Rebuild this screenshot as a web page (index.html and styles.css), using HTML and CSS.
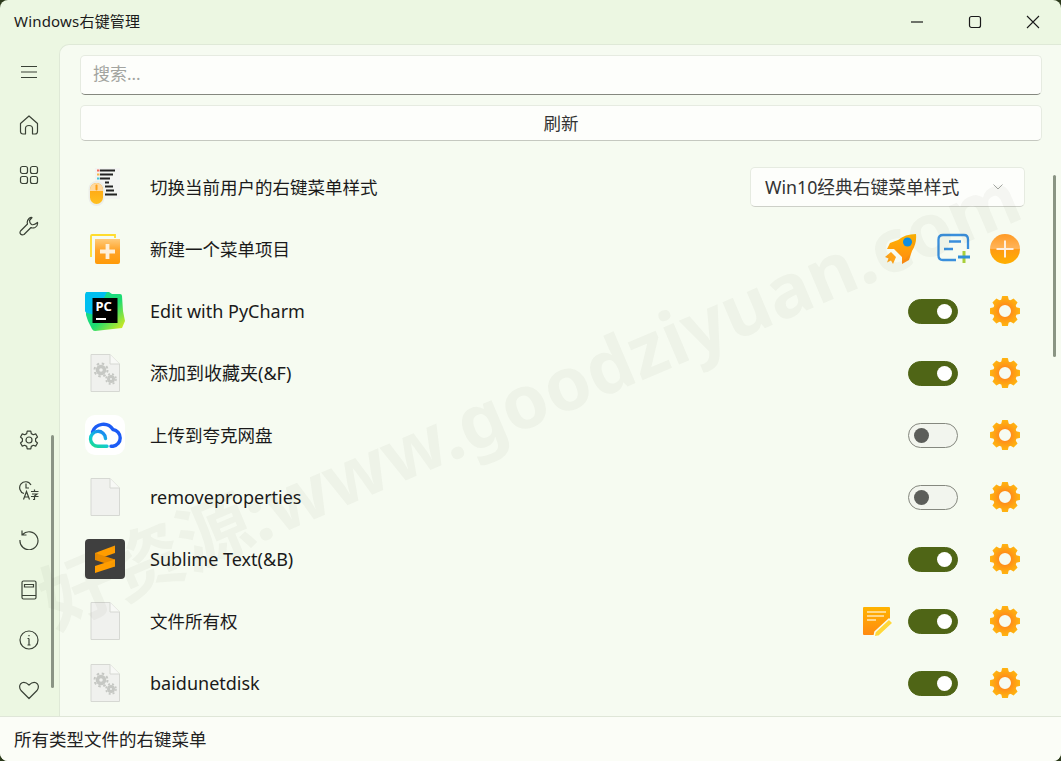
FILE: index.html
```html
<!DOCTYPE html>
<html>
<head>
    <meta charset="utf-8">
    <title>Windows右键管理</title>
    <link rel="stylesheet" href="styles.css">
</head>
<body>
    <!-- 共用图标 -->
    <svg class="svg-defs" aria-hidden="true">
        <defs>
            <linearGradient id="orange" x1="0" y1="0" x2="0" y2="1">
                <stop offset="0" stop-color="#ffb300"/>
                <stop offset="1" stop-color="#ff8a12"/>
            </linearGradient>
            <linearGradient id="mouse" x1="0" y1="0" x2="0" y2="1">
                <stop offset="0" stop-color="#ffa010"/>
                <stop offset="1" stop-color="#ffc020"/>
            </linearGradient>
            <linearGradient id="folder" x1="0" y1="0" x2="0" y2="1">
                <stop offset="0" stop-color="#ffcb7a"/>
                <stop offset="0.45" stop-color="#ffa42a"/>
                <stop offset="1" stop-color="#ff9a08"/>
            </linearGradient>
            <linearGradient id="plus-btn" x1="0" y1="0" x2="0" y2="1">
                <stop offset="0" stop-color="#ff9a24"/>
                <stop offset="0.48" stop-color="#ffb45a"/>
                <stop offset="0.52" stop-color="#ff9a12"/>
                <stop offset="1" stop-color="#ffb000"/>
            </linearGradient>
            <linearGradient id="cloud-teal" x1="0" y1="1" x2="0.6" y2="0">
                <stop offset="0" stop-color="#1bdc8a"/>
                <stop offset="0.5" stop-color="#12c8d8"/>
                <stop offset="1" stop-color="#1a8cf0"/>
            </linearGradient>
            <linearGradient id="pc-green" x1="0" y1="0" x2="1" y2="1">
                <stop offset="0" stop-color="#12d8a0"/>
                <stop offset="0.55" stop-color="#1ddc70"/>
                <stop offset="1" stop-color="#f4ea10"/>
            </linearGradient>
            <radialGradient id="gear-ring" gradientUnits="userSpaceOnUse" cx="16" cy="16" r="16">
                <stop offset="0.4" stop-color="#ff8f1a"/>
                <stop offset="0.62" stop-color="#ffa014"/>
                <stop offset="1" stop-color="#ffb810"/>
            </radialGradient>
            <symbol id="file" viewBox="0 0 40 40">
                <path d="M6 1.500H25L34.500 11V38.500H6Z" fill="#f0f1ee" stroke="#d6d8d3"/>
                <path d="M25 1.500V11H34.500" fill="#f8f9f6" stroke="#d6d8d3"/>
            </symbol>
            <symbol id="file-gear" viewBox="0 0 40 40">
                <use href="#file"/>
                <circle cx="16" cy="17" r="3.500" fill="none" stroke="#c6c8c4" stroke-width="3.500"/>
                <circle cx="16" cy="17" r="6.500" fill="none" stroke="#c6c8c4" stroke-width="2" stroke-dasharray="2.500 2.600"/>
                <circle cx="26" cy="26" r="2.500" fill="none" stroke="#c6c8c4" stroke-width="3"/>
                <circle cx="26" cy="26" r="5" fill="none" stroke="#c6c8c4" stroke-width="1.600" stroke-dasharray="2 2"/>
            </symbol>
            <symbol id="gear" viewBox="0 0 32 32">
                <g fill="url(#gear-ring)">
                    <path d="M13 1.500Q13 1 13.500 1H18.500Q19 1 19 1.500L20 6H12Z"/>
                    <path d="M13 1.500Q13 1 13.500 1H18.500Q19 1 19 1.500L20 6H12Z" transform="rotate(45 16 16)"/>
                    <path d="M13 1.500Q13 1 13.500 1H18.500Q19 1 19 1.500L20 6H12Z" transform="rotate(90 16 16)"/>
                    <path d="M13 1.500Q13 1 13.500 1H18.500Q19 1 19 1.500L20 6H12Z" transform="rotate(135 16 16)"/>
                    <path d="M13 1.500Q13 1 13.500 1H18.500Q19 1 19 1.500L20 6H12Z" transform="rotate(180 16 16)"/>
                    <path d="M13 1.500Q13 1 13.500 1H18.500Q19 1 19 1.500L20 6H12Z" transform="rotate(225 16 16)"/>
                    <path d="M13 1.500Q13 1 13.500 1H18.500Q19 1 19 1.500L20 6H12Z" transform="rotate(270 16 16)"/>
                    <path d="M13 1.500Q13 1 13.500 1H18.500Q19 1 19 1.500L20 6H12Z" transform="rotate(315 16 16)"/>
                </g>
                <circle cx="16" cy="16" r="9" fill="none" stroke="url(#gear-ring)" stroke-width="6"/>
            </symbol>
        </defs>
    </svg>

    <div class="window">
        <header class="titlebar">
            <span class="app-title">Windows右键管理</span>
            <div class="win-buttons">
                <svg width="14" height="14" viewBox="0 0 14 14"><path d="M1 7H13" stroke="#1a1a1a" stroke-width="1.200"/></svg>
                <svg width="14" height="14" viewBox="0 0 14 14"><rect x="1.500" y="1.500" width="11" height="11" rx="2" fill="none" stroke="#1a1a1a" stroke-width="1.200"/></svg>
                <svg width="14" height="14" viewBox="0 0 14 14"><path d="M1 1L13 13M13 1L1 13" stroke="#1a1a1a" stroke-width="1.100"/></svg>
            </div>
        </header>

        <div class="body-area">
            <nav class="sidebar">
                <div class="nav-group nav-top">
                    <svg class="nav-icon nav-menu" viewBox="0 0 20 20"><path d="M2 4.500H18M2 10H18M2 15.500H18"/></svg>
                    <svg class="nav-icon" viewBox="0 0 20 20"><path d="M1.500 8.500L10 1L18.500 8.500V16.500Q18.500 19 16 19H13.500V13.500Q13.500 10.500 10 10.500Q6.500 10.500 6.500 13.500V19H4Q1.500 19 1.500 16.500Z" stroke-linejoin="round"/></svg>
                    <svg class="nav-icon" viewBox="0 0 20 20"><rect x="1.500" y="1.500" width="7" height="7" rx="2"/><rect x="11.500" y="1.500" width="7" height="7" rx="2"/><rect x="1.500" y="11.500" width="7" height="7" rx="2"/><rect x="11.500" y="11.500" width="7" height="7" rx="2"/></svg>
                    <svg class="nav-icon" viewBox="0 0 20 20"><path d="M13 1.500L10.500 4.500Q10.500 7 12.500 8.500Q15 9.500 18.500 6.500Q19 10 16 11.500Q13.500 12.500 12 11.500L5 18.500Q3 19.500 1.500 18Q0.500 16.500 1.500 15L8.500 8Q7.500 5 10 2.500Q11.500 1.200 13 1.500Z" stroke-linejoin="round"/></svg>
                </div>
                <div class="nav-group">
                    <svg class="nav-icon" viewBox="0 0 20 20"><circle cx="10" cy="10" r="3"/><path d="M8.200 1.200H11.800L12.300 3.600L14.300 4.700L16.700 3.900L18.500 7L16.600 8.700V11.300L18.500 13L16.700 16.100L14.300 15.300L12.300 16.400L11.800 18.800H8.200L7.700 16.400L5.700 15.300L3.300 16.100L1.500 13L3.400 11.300V8.700L1.500 7L3.300 3.900L5.700 4.700L7.700 3.600Z" stroke-linejoin="round"/></svg>
                    <svg class="nav-icon" viewBox="0 0 20 20"><path d="M5 13.500A6 6 0 1 1 12 5M7 3.500V8H10"/><path d="M4.500 19.500L7.500 11.500L10.500 19.500M5.500 17H9.500M12 11.500H19.500M15.500 9.500V11.500M13 14H18L15.500 16V19.500L14 19.500M12 16.500H19.500"/></svg>
                    <svg class="nav-icon" viewBox="0 0 20 20"><path d="M3.500 4.500A9 9 0 1 1 1 10M3 0.500V5H7.500"/></svg>
                    <svg class="nav-icon" viewBox="0 0 20 20"><rect x="3" y="1" width="14" height="18" rx="1.500"/><path d="M3 15.500H17M5.500 4.500H14.500V7H5.500Z"/></svg>
                    <svg class="nav-icon" viewBox="0 0 20 20"><circle cx="10" cy="10" r="9"/><path d="M10 8.500V15M8.500 8.500H10M8.500 15H11.500M10 5V6.200"/></svg>
                    <svg class="nav-icon" viewBox="0 0 20 20"><path d="M10 18.500L2 10.500Q-0.500 7 1.500 4Q5 0.500 10 5Q15 0.500 18.500 4Q20.500 7 18 10.500Z" stroke-linejoin="round"/></svg>
                </div>
                <div class="nav-scroll"></div>
            </nav>

            <main class="content">
                <div class="search-box">搜索...</div>
                <div class="refresh-btn">刷新</div>

                <div class="menu-list">
                    <div class="menu-row">
                        <svg class="row-icon" viewBox="0 0 40 40">
                            <rect x="10" y="1" width="25" height="31" fill="#f3f4f2"/>
                            <path d="M15 3.500H30M15 7.500H28M15 11.500H25" stroke="#222" stroke-width="2"/>
                            <path d="M12 3.500H14.500" stroke="#f06a5a" stroke-width="2"/>
                            <path d="M12 7.500H14.500" stroke="#f4b84a" stroke-width="2"/>
                            <path d="M12 11.500H14.500" stroke="#4ac6d8" stroke-width="2"/>
                            <path d="M20 15.500H24M20 19.500H28M21 23.500H29M20 27.500H32" stroke="#222" stroke-width="2"/>
                            <rect x="3.500" y="14" width="16" height="25" rx="8" fill="#eceeea"/>
                            <rect x="5" y="16" width="13" height="21" rx="6.500" fill="url(#mouse)"/>
                            <path d="M5 24V22.500A6.500 6.500 0 0 1 18 22.500V24Z" fill="#ffd9a0"/>
                            <rect x="10.500" y="17.500" width="2" height="6" rx="1" fill="#ff9f14"/>
                        </svg>
                        <span class="row-label">切换当前用户的右键菜单样式</span>
                        <div class="row-actions">
                            <div class="combo">
                                <span class="combo-text">Win10经典右键菜单样式</span>
                                <svg width="12" height="8" viewBox="0 0 12 8"><path d="M1.500 1.500L6 6L10.500 1.500" fill="none" stroke="#a5a8a3"/></svg>
                            </div>
                        </div>
                    </div>

                    <div class="menu-row">
                        <svg class="row-icon" viewBox="0 0 40 40">
                            <path d="M6 28V7Q6 6 7 6H30V9" fill="none" stroke="#ffdc2e" stroke-width="1.800"/>
                            <path d="M10 10H35V33Q35 35 33 35H12Q10 35 10 33Z" fill="url(#folder)"/>
                            <path d="M22.500 15V30M15 22.500H30" stroke="#fff0d8" stroke-width="3.800"/>
                        </svg>
                        <span class="row-label">新建一个菜单项目</span>
                        <div class="row-actions">
                            <svg class="action-icon" viewBox="0 0 40 40">
                                <path d="M35 5Q24 5 17 11L9 14L6 20L13 20L21 28L21 35L28 31L31 22Q36 14 35 5Z" fill="url(#orange)"/>
                                <circle cx="26.500" cy="13" r="4.500" fill="#0f8ee0"/>
                                <path d="M10 23L15 28L12 35L10 31.500L6 33.500L7.500 29.500L4 28Z" fill="#ffa418"/>
                            </svg>
                            <svg class="action-icon" viewBox="0 0 40 40">
                                <path d="M23 31H10Q5.500 31 5.500 26.500V10.500Q5.500 6 10 6H31Q35 6 35 10.500V20" fill="none" stroke="#3a8fdc" stroke-width="2.300"/>
                                <path d="M16 12.500H28M11 20H20" stroke="#3a8fdc" stroke-width="2.300"/>
                                <path d="M31 22V34" stroke="#a8cf3a" stroke-width="3"/>
                                <path d="M25 28H37" stroke="#2f8fd8" stroke-width="3"/>
                            </svg>
                            <svg class="action-icon" viewBox="0 0 40 40">
                                <circle cx="20" cy="20" r="15" fill="url(#plus-btn)"/>
                                <path d="M20 11.500V28.500M11.500 20H28.500" stroke="#ffeedd" stroke-width="2"/>
                            </svg>
                        </div>
                    </div>

                    <div class="menu-row">
                        <svg class="row-icon" viewBox="0 0 40 40">
                            <path d="M1 2Q0 1 2 1L24 1L27 3H35Q37 3 37 5L38 20L40 30L37 37L10 40Q8 40 7 38L3 30L1 24Z" fill="url(#pc-green)"/>
                            <path d="M0 4Q0 1 3 1H22L10 24L2 22Q0 21 0 20Z" fill="#00bff0"/>
                            <rect x="7.500" y="7" width="25" height="25" fill="#000"/>
                            <text x="10.500" y="20" class="pc-text">PC</text>
                            <rect x="11" y="27" width="10" height="2" fill="#fff"/>
                        </svg>
                        <span class="row-label latin">Edit with PyCharm</span>
                        <div class="row-actions">
                            <div class="toggle on"><i></i></div>
                            <svg class="gear-icon" viewBox="0 0 32 32"><use href="#gear"/></svg>
                        </div>
                    </div>

                    <div class="menu-row">
                        <svg class="row-icon" viewBox="0 0 40 40"><use href="#file-gear"/></svg>
                        <span class="row-label mixed">添加到收藏夹(&amp;F)</span>
                        <div class="row-actions">
                            <div class="toggle on"><i></i></div>
                            <svg class="gear-icon" viewBox="0 0 32 32"><use href="#gear"/></svg>
                        </div>
                    </div>

                    <div class="menu-row">
                        <svg class="row-icon" viewBox="0 0 40 40">
                            <rect width="40" height="40" rx="10" fill="#fff"/>
                            <path d="M7.500 17A11.500 11.500 0 0 1 28 14.500A8.500 8.500 0 0 1 28 31.300H26" fill="none" stroke="#1c5cf5" stroke-width="3.400" stroke-linecap="round"/>
                            <path d="M22 31.300H13.500A7.500 7.500 0 1 1 20.500 23.500" fill="none" stroke="url(#cloud-teal)" stroke-width="3.400" stroke-linecap="round"/>
                        </svg>
                        <span class="row-label">上传到夸克网盘</span>
                        <div class="row-actions">
                            <div class="toggle"><i></i></div>
                            <svg class="gear-icon" viewBox="0 0 32 32"><use href="#gear"/></svg>
                        </div>
                    </div>

                    <div class="menu-row">
                        <svg class="row-icon" viewBox="0 0 40 40"><use href="#file"/></svg>
                        <span class="row-label latin">removeproperties</span>
                        <div class="row-actions">
                            <div class="toggle"><i></i></div>
                            <svg class="gear-icon" viewBox="0 0 32 32"><use href="#gear"/></svg>
                        </div>
                    </div>

                    <div class="menu-row">
                        <svg class="row-icon" viewBox="0 0 40 40">
                            <rect width="40" height="40" rx="4" fill="#3f3f3f"/>
                            <path d="M30 6.500V14L10 21V14Z" fill="#ff9d00"/>
                            <path d="M10 14L30 20.500V27.500L10 21Z" fill="#e88a00"/>
                            <path d="M30 20.500V27.500L10 34V27Z" fill="#ff9d00"/>
                        </svg>
                        <span class="row-label latin">Sublime Text(&amp;B)</span>
                        <div class="row-actions">
                            <div class="toggle on"><i></i></div>
                            <svg class="gear-icon" viewBox="0 0 32 32"><use href="#gear"/></svg>
                        </div>
                    </div>

                    <div class="menu-row">
                        <svg class="row-icon" viewBox="0 0 40 40"><use href="#file"/></svg>
                        <span class="row-label">文件所有权</span>
                        <div class="row-actions">
                            <svg class="action-icon" viewBox="0 0 40 40">
                                <path d="M8 6H33Q34 6 34 7V20L19 34H8Q7 34 7 33V7Q7 6 8 6Z" fill="url(#orange)"/>
                                <path d="M11 11H30M11 15H28M11 19H20" stroke="#ffe8b8" stroke-width="1.500"/>
                                <path d="M33 18L37 22L23 35L18 36L19 31Z" fill="#ffd83a" stroke="#f8fbf2" stroke-width="1.500"/>
                            </svg>
                            <div class="toggle on"><i></i></div>
                            <svg class="gear-icon" viewBox="0 0 32 32"><use href="#gear"/></svg>
                        </div>
                    </div>

                    <div class="menu-row">
                        <svg class="row-icon" viewBox="0 0 40 40"><use href="#file-gear"/></svg>
                        <span class="row-label latin">baidunetdisk</span>
                        <div class="row-actions">
                            <div class="toggle on"><i></i></div>
                            <svg class="gear-icon" viewBox="0 0 32 32"><use href="#gear"/></svg>
                        </div>
                    </div>
                </div>

                <div class="list-scroll"></div>
            </main>
        </div>

        <footer class="statusbar">所有类型文件的右键菜单</footer>

        <div class="watermark">好资源:www.goodziyuan.com</div>
    </div>
</body>
</html>
```

FILE: styles.css
```css
html, body {
    margin: 0;
    height: 100%;
}
body {
    background: #2c3a1c;
    font-family: "Noto Sans", "Noto Sans CJK SC", sans-serif;
    color: #1a1a1a;
    overflow: hidden;
}
.svg-defs {
    position: absolute;
    width: 0;
    height: 0;
}
.window {
    position: relative;
    height: 761px;
    display: flex;
    flex-direction: column;
    background: #ecf7e2;
    border-radius: 8px;
    overflow: hidden;
}
.titlebar {
    height: 44px;
    flex: none;
    display: flex;
    align-items: center;
    justify-content: space-between;
    padding-left: 14px;
}
.app-title {
    font-size: 15px;
    letter-spacing: 0.2px;
    padding-bottom: 4px;
}
.win-buttons {
    display: flex;
    gap: 44px;
    padding-right: 21px;
}
.body-area {
    flex: 1;
    display: flex;
    min-height: 0;
}
.sidebar {
    position: relative;
    width: 59px;
    flex: none;
    display: flex;
    flex-direction: column;
    justify-content: space-between;
    padding: 18px 1px 16px 0;
    box-sizing: border-box;
}
.nav-group {
    display: flex;
    flex-direction: column;
    align-items: center;
    gap: 30px;
}
.nav-top {
    gap: 30.500px;
}
.nav-menu {
    margin-bottom: 2px;
}
.nav-icon {
    width: 20px;
    height: 20px;
    fill: none;
    stroke: #3a4236;
    stroke-width: 1.200;
}
.nav-scroll {
    position: absolute;
    left: 51px;
    top: 391px;
    width: 3px;
    height: 253px;
    border-radius: 2px;
    background: #8a9484;
}
.content {
    position: relative;
    flex: 1;
    min-width: 0;
    background: #f6fbf1;
    border-left: 1px solid #dfe9d7;
    border-top: 1px solid #dfe9d7;
    border-top-left-radius: 10px;
    padding: 10px 19px 0 20px;
    box-sizing: border-box;
}
.search-box {
    height: 40px;
    box-sizing: border-box;
    display: flex;
    align-items: center;
    padding: 0 0 6px 12px;
    background: #fdfefb;
    border: 1px solid #e6ebe1;
    border-bottom: 1px solid #85887f;
    border-radius: 5px;
    font-size: 17px;
    color: #a2a4a0;
}
.refresh-btn {
    height: 36px;
    margin-top: 10px;
    box-sizing: border-box;
    display: flex;
    align-items: center;
    justify-content: center;
    padding-bottom: 2px;
    background: #fdfefb;
    border: 1px solid #e6ebe1;
    border-bottom-color: #c5c8c0;
    border-radius: 5px;
    font-size: 17.500px;
    color: #333;
}
.menu-list {
    margin-top: 15px;
}
.menu-row {
    height: 62px;
    display: flex;
    align-items: center;
    padding: 0 17px 0 5px;
}
.row-icon {
    width: 40px;
    height: 40px;
    flex: none;
}
.row-label {
    flex: 1;
    margin-left: 25px;
    padding-bottom: 2px;
    font-size: 17.500px;
    color: #1a1a1a;
}
.row-label.latin {
    padding-bottom: 0;
    font-size: 18px;
}
.row-label.mixed {
    font-size: 18px;
}
.row-actions {
    display: flex;
    align-items: center;
    gap: 12px;
}
.action-icon {
    width: 40px;
    height: 40px;
}
.gear-icon {
    width: 32px;
    height: 32px;
    margin: 0 4px 0 19px;
}
.combo {
    width: 275px;
    height: 40px;
    box-sizing: border-box;
    display: flex;
    align-items: center;
    justify-content: space-between;
    padding: 0 20px 0 14px;
    background: #fdfefb;
    border: 1px solid #e6ebe1;
    border-bottom-color: #cdd0c8;
    border-radius: 5px;
    font-size: 17.750px;
    color: #333;
}
.combo-text {
    padding-bottom: 2px;
}
.toggle {
    width: 50px;
    height: 25px;
    box-sizing: border-box;
    display: flex;
    align-items: center;
    padding-left: 5px;
    background: #f2f5ee;
    border: 1px solid #85887f;
    border-radius: 13px;
}
.toggle i {
    width: 15px;
    height: 15px;
    border-radius: 50%;
    background: #5c5e5a;
}
.toggle.on {
    justify-content: flex-end;
    padding: 0 5px 0 0;
    background: #4f6516;
    border-color: #4f6516;
}
.toggle.on i {
    background: #fff;
}
.pc-text {
    font-family: "Noto Sans", sans-serif;
    font-size: 13px;
    font-weight: 700;
    fill: #fff;
}
.list-scroll {
    position: absolute;
    right: 5px;
    top: 130px;
    width: 3px;
    height: 182px;
    border-radius: 2px;
    background: #8a9484;
}
.statusbar {
    height: 45px;
    flex: none;
    box-sizing: border-box;
    display: flex;
    align-items: center;
    padding: 0 0 2px 14px;
    background: #fbfdf7;
    border-top: 1px solid #dfe6d8;
    font-size: 17.500px;
    color: #222;
}
.watermark {
    position: absolute;
    left: 0;
    top: 340px;
    white-space: nowrap;
    font-size: 74px;
    font-weight: 700;
    color: rgba(60, 70, 50, 0.045);
    transform: rotate(-23deg);
    pointer-events: none;
}
```
